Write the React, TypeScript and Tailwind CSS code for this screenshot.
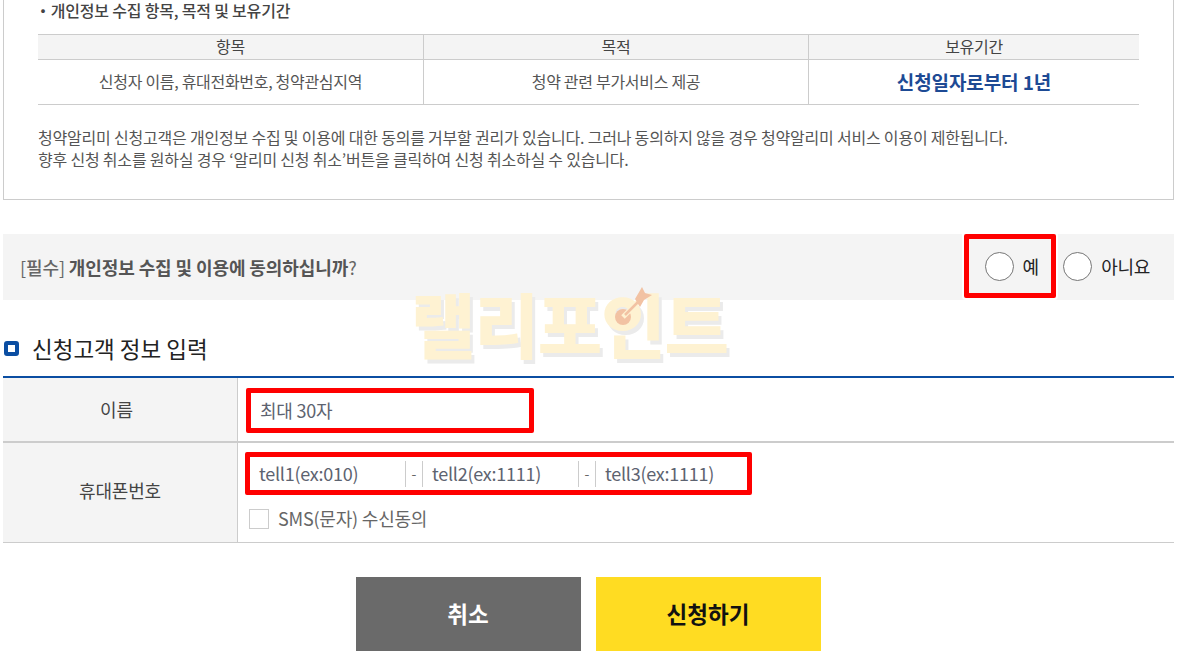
import React from 'react';

const font = { fontFamily: '"Noto Sans CJK KR", "Noto Sans", sans-serif' };

function Radio({ label }: { label: string }) {
  return (
    <label className="flex items-center gap-[9px]">
      <span className="w-[29px] h-[29px] rounded-full bg-white border border-[#767676] shrink-0" />
      <span className="text-[18px] tracking-[-0.3px] text-[#222]">{label}</span>
    </label>
  );
}

function TelField({ placeholder, width }: { placeholder: string; width: string }) {
  return (
    <span className={`${width} h-[26px] flex items-center pl-[9px] text-[18px] text-[#5d6370] tracking-[-0.25px]`}>{placeholder}</span>
  );
}

function Dash() {
  return <span className="w-[18px] h-[26px] flex items-center justify-center border-x border-[#ccc] text-[14px] text-[#666]">-</span>;
}

export default function App() {
  return (
    <div style={font} className="relative w-[1180px] h-[658px] overflow-hidden bg-white pl-[3px] pr-[6px] text-[#555]">
      {/* 동의 안내 박스 */}
      <div className="h-[200px] border-x border-b border-[#ccc] px-[34px]">
        <p className="h-[34px] -ml-[3px] text-[16px] leading-[20px] tracking-[-0.2px] font-medium text-[#444]">・개인정보 수집 항목, 목적 및 보유기간</p>
        <div className="grid grid-cols-[386px_385px_330px] border-y border-[#ccc] text-center text-[16px] tracking-[-0.3px]">
          <div className="h-[25px] leading-[23px] bg-[#f4f4f4] border-b border-r border-[#ccc] text-[#444]">항목</div>
          <div className="h-[25px] leading-[23px] bg-[#f4f4f4] border-b border-r border-[#ccc] text-[#444]">목적</div>
          <div className="h-[25px] leading-[23px] bg-[#f4f4f4] border-b border-[#ccc] text-[#444]">보유기간</div>
          <div className="h-[44px] leading-[43px] border-r border-[#ccc]">신청자 이름, 휴대전화번호, 청약관심지역</div>
          <div className="h-[44px] leading-[43px] border-r border-[#ccc]">청약 관련 부가서비스 제공</div>
          <div className="h-[44px] leading-[43px] text-[19px] tracking-[-0.1px] font-bold text-[#1d4a94]">신청일자로부터 1년</div>
        </div>
        <p className="mt-[21px] text-[16px] tracking-[-0.2px] leading-[22px] text-[#555]">
          청약알리미 신청고객은 개인정보 수집 및 이용에 대한 동의를 거부할 권리가 있습니다. 그러나 동의하지 않을 경우 청약알리미 서비스 이용이 제한됩니다.
          <br />
          향후 신청 취소를 원하실 경우 ‘알리미 신청 취소’버튼을 클릭하여 신청 취소하실 수 있습니다.
        </p>
      </div>

      {/* 동의 여부 */}
      <div className="mt-[34px] h-[66px] bg-[#f4f4f4] flex items-center pl-[17px] pr-[24px]">
        <p className="flex-1 text-[18px] tracking-[-0.1px] text-[#666]">
          [<span className="font-medium">필수</span>] <strong className="font-bold text-[#555]">개인정보 수집 및 이용에 동의하십니까</strong>?
        </p>
        <div className="flex items-center self-start">
          <div className="w-[92px] h-[64px] pl-[3px] flex items-center justify-center border-[5px] border-[#ff0000] rounded-[2px] ring-2 ring-white">
            <Radio label="예" />
          </div>
          <div className="ml-[7px] mt-[1px]">
            <Radio label="아니요" />
          </div>
        </div>
      </div>

      {/* 신청고객 정보 입력 */}
      <div className="mt-[30px] h-[36px] flex items-center gap-[13px] pl-[1px]">
        <span className="w-[15px] h-[15px] rounded-[3px] border-[4px] border-[#0b4ea2] bg-white" />
        <h2 className="text-[22.5px] leading-[36px] font-normal text-[#222]">신청고객 정보 입력</h2>
      </div>

      <div className="mt-[10px] border-t-2 border-[#0b4ea2]">
        <div className="flex h-[65px] border-b-2 border-[#ccc]">
          <div className="w-[235px] pr-[7px] bg-[#f4f4f4] border-r border-[#ccc] flex items-center justify-center text-[18px] tracking-[-0.15px] text-[#444]">이름</div>
          <div className="flex-1 pl-[8px] pt-[10px]">
            <div className="w-[288px] h-[45px] border-[5px] border-[#ff0000] rounded-[2px] flex items-center pl-[9px] text-[18px] tracking-[-0.25px] text-[#5d6370]">최대 30자</div>
          </div>
        </div>
        <div className="flex h-[100px] border-b border-[#ccc]">
          <div className="w-[235px] pb-[4px] bg-[#f4f4f4] border-r border-[#ccc] flex items-center justify-center text-[18px] tracking-[-0.15px] text-[#444]">휴대폰번호</div>
          <div className="flex-1 pl-[7px] pt-[9px]">
            <div className="w-[507px] h-[43px] border-[5px] border-[#ff0000] rounded-[2px] flex items-center">
              <TelField placeholder="tell1(ex:010)" width="w-[155px]" />
              <Dash />
              <TelField placeholder="tell2(ex:1111)" width="w-[155px]" />
              <Dash />
              <TelField placeholder="tell3(ex:1111)" width="w-[150px]" />
            </div>
            <label className="mt-[10px] ml-[4px] flex items-center gap-[9px] text-[18px] tracking-[-0.2px] text-[#666]">
              <span className="w-[20px] h-[20px] border border-[#ccc] bg-white" />
              SMS(문자) 수신동의
            </label>
          </div>
        </div>
      </div>

      {/* 버튼 */}
      <div className="mt-[34px] flex justify-center gap-[15px] pr-[1px]">
        <button className="w-[225px] h-[74px] bg-[#6a6a6a] text-white text-[22.5px] font-bold">취소</button>
        <button className="w-[225px] h-[74px] bg-[#ffdc22] text-[#111] text-[22.5px] font-bold">신청하기</button>
      </div>

      {/* 워터마크 */}
      <div className="absolute left-[411px] top-[278px] pointer-events-none select-none">
        <span className="block text-[70px] leading-[90px] font-black tracking-[-1px] text-[#fef2d2] [text-shadow:3px_4px_0_#ebebeb] whitespace-nowrap">랠리포인트</span>
        <svg className="absolute left-[199px] top-[8px]" width="54" height="44" viewBox="0 0 54 44">
          <circle cx="13" cy="31" r="8" fill="#f2c2a3" />
          <path d="M13 31 L30 14" stroke="#fef2d2" strokeWidth="5" />
          <path d="M15 29 L30 14" stroke="#f2c2a3" strokeWidth="2.5" />
          <path d="M32 1 L35 7 L42 9 L34 14 L30 21 L25 13 Z" fill="#f2c2a3" />
        </svg>
      </div>
    </div>
  );
}
